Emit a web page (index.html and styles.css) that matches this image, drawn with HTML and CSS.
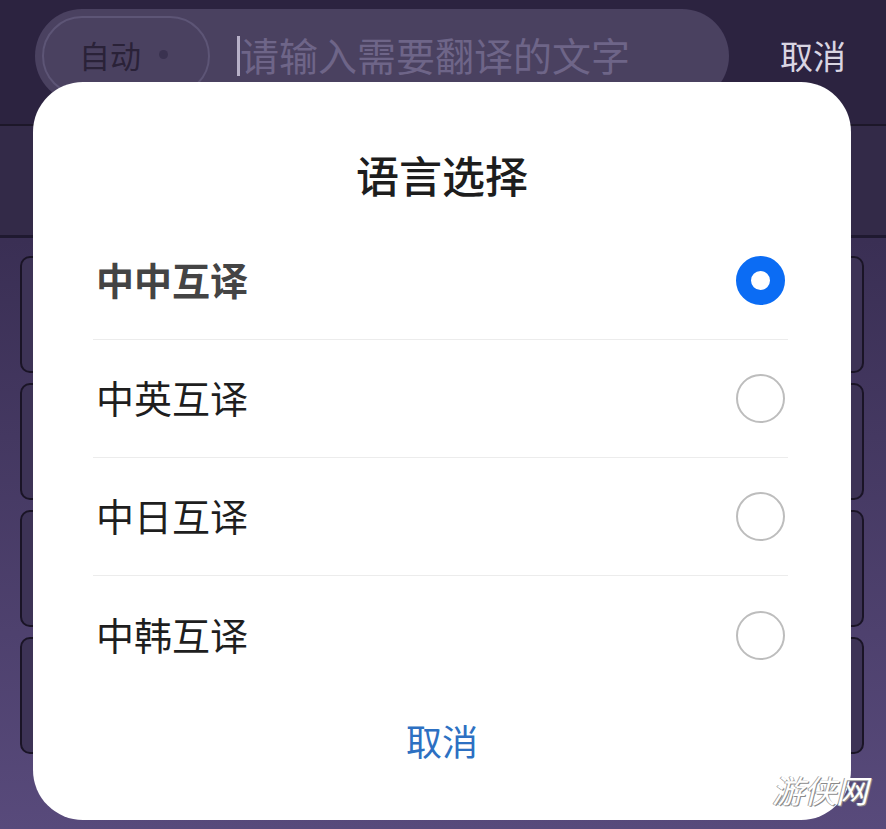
FILE: index.html
```html
<!DOCTYPE html>
<html>

<head>
    <title>语言选择</title>
    <meta name="viewport" content="width=device-width,initial-scale=1" />
    <link rel="stylesheet" href="styles.css">
</head>

<body>
    <div class="screen">
        <div class="topbar">
            <div class="search">
                <div class="chip">自动 <span class="chip-dot"></span></div>
                <span class="cursor"></span>
                <span class="placeholder">请输入需要翻译的文字</span>
            </div>
            <span class="top-cancel">取消</span>
        </div>
        <div class="tabs"></div>
        <div class="cards">
            <div class="card"></div>
            <div class="card"></div>
            <div class="card"></div>
            <div class="card"></div>
        </div>

        <div class="dialog">
            <h1 class="dialog-title">语言选择</h1>
            <ul class="options">
                <li class="option selected"><span class="label">中中互译</span><span class="radio"></span></li>
                <li class="option"><span class="label">中英互译</span><span class="radio"></span></li>
                <li class="option"><span class="label">中日互译</span><span class="radio"></span></li>
                <li class="option"><span class="label">中韩互译</span><span class="radio"></span></li>
            </ul>
            <div class="dialog-footer">取消</div>
        </div>

        <div class="watermark">游侠网</div>
    </div>
</body>

</html>
```

FILE: styles.css
```css
* {
    box-sizing: border-box;
}

body {
    margin: 0;
    font-family: "Noto Sans CJK SC", "Noto Sans", sans-serif;
}

.screen {
    position: relative;
    width: 886px;
    height: 829px;
    overflow: hidden;
    background: linear-gradient(#3a2f54 240px, #584a7b 829px);
}

.topbar {
    height: 126px;
    background: #2c2340;
    border-bottom: 2px solid #1d1729;
    display: flex;
    align-items: flex-start;
    padding: 9px 0 0 35px;
}

.search {
    width: 694px;
    height: 94px;
    border-radius: 47px;
    background: #4a4160;
    display: flex;
    align-items: center;
    padding-left: 7px;
}

.chip {
    width: 168px;
    height: 80px;
    border-radius: 40px;
    border: 2px solid #5d5576;
    display: flex;
    align-items: center;
    padding: 0 0 4px 35px;
    font-size: 31px;
    color: #2a2238;
    gap: 18px;
}

.chip-dot {
    width: 9px;
    height: 9px;
    border-radius: 50%;
    background: #3a3250;
}

.cursor {
    width: 3px;
    height: 40px;
    background: #b7b0c8;
    margin-left: 27px;
}

.placeholder {
    font-size: 39px;
    color: #6e6588;
    line-height: 1;
    margin-bottom: 4px;
}

.top-cancel {
    margin: 22px 0 0 51px;
    font-size: 33px;
    color: #d9d5e2;
}

.tabs {
    height: 112px;
    background: #332a48;
    border-bottom: 3px solid #1f1930;
}

.cards {
    display: flex;
    flex-direction: column;
    gap: 10px;
    padding: 18px 22px 0 20px;
}

.card {
    height: 117px;
    border: 2px solid #1a1426;
    border-radius: 10px;
    background: #3d3356;
}

.dialog {
    position: absolute;
    left: 33px;
    top: 82px;
    width: 818px;
    height: 738px;
    background: #fff;
    border-radius: 50px;
}

.dialog-title {
    margin: 68px 0 24px;
    text-align: center;
    font-size: 43px;
    line-height: 48px;
    font-weight: 500;
    color: #1d1d1d;
}

.options {
    list-style: none;
    margin: 0 63px 0 60px;
    padding: 0;
}

.option {
    height: 118px;
    display: flex;
    align-items: center;
    justify-content: space-between;
    padding: 0 3px 0 3px;
    font-size: 38px;
    color: #1e1e1e;
    border-bottom: 1px solid #ececec;
}

.option:last-child {
    border-bottom: none;
}

.label {
    margin-bottom: 4px;
}

.option.selected {
    font-weight: 700;
    color: #444;
}

.radio {
    width: 49px;
    height: 49px;
    border-radius: 50%;
    border: 2px solid #bdbdbd;
}

.selected .radio {
    border: 15px solid #0b6cf4;
}

.dialog-footer {
    margin-top: 23px;
    text-align: center;
    font-size: 36px;
    line-height: 46px;
    color: #2d70c2;
}

.watermark {
    position: absolute;
    right: 18px;
    bottom: 17px;
    font-size: 32px;
    font-style: italic;
    color: #fff;
    text-shadow: 1px 1px 0 #8a8a8a, -1px 0 0 #9a9a9a;
}
```
